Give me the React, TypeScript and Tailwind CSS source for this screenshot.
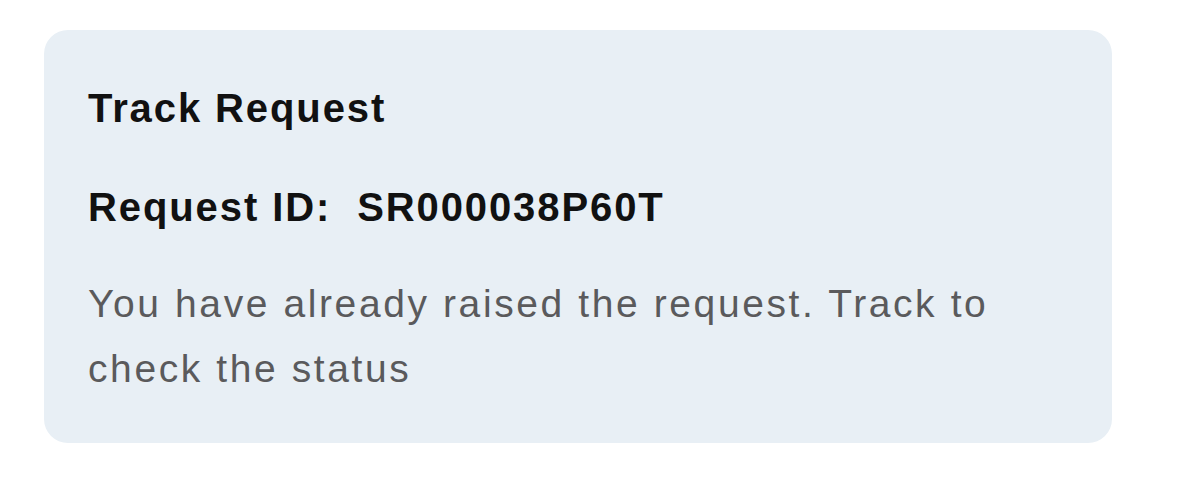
export default function App() {
  return (
    <div className="w-[1200px] h-[485px] bg-white pt-[30px] pl-[44px]" style={{ fontFamily: '"Liberation Sans", Arial, sans-serif' }}>
      <div className="w-[1068px] h-[413px] rounded-[24px] bg-[#e8eff5] pt-[54px] pl-[44px]">
        <div className="text-[40px] leading-[48px] font-bold text-[#111111] tracking-[1.9px]">Track Request</div>
        <div className="mt-[51px] text-[40px] leading-[48px] font-bold text-[#111111] tracking-[1.9px]">
          Request ID:&nbsp; SR000038P60T
        </div>
        <p className="mt-[40px] text-[39px] leading-[65px] text-[#5a5a5c] tracking-[2.6px] w-[960px]">
          You have already raised the request. Track to check the status
        </p>
      </div>
    </div>
  );
}
